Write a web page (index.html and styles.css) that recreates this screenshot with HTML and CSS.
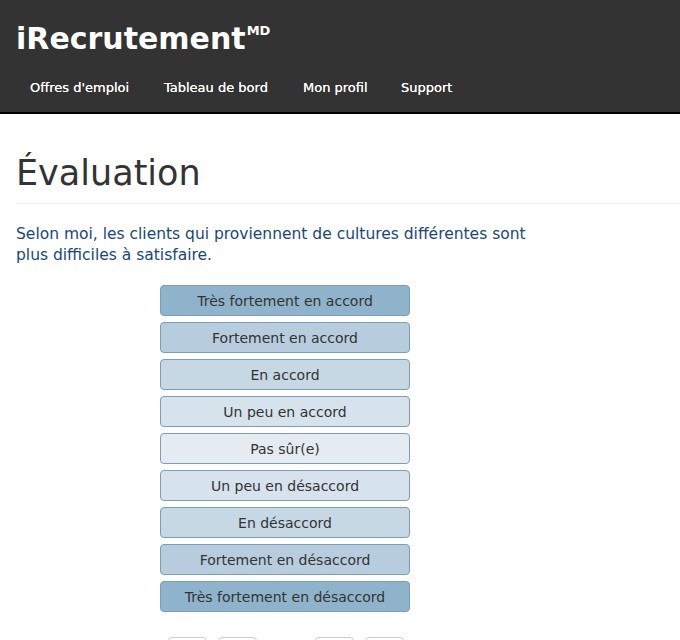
FILE: index.html
```html
<!DOCTYPE html>
<html lang="fr">
<head>
    <meta charset="UTF-8">
    <title>iRecrutement - Évaluation</title>
    <link rel="stylesheet" href="styles.css">
</head>
<body>
<header class="topbar">
    <div class="brand">iRecrutement<sup>MD</sup></div>
    <nav class="menu">
        <a href="#">Offres d'emploi</a>
        <a href="#">Tableau de bord</a>
        <a href="#">Mon profil</a>
        <a href="#">Support</a>
    </nav>
</header>

<main class="page">
    <h1>Évaluation</h1>

    <p class="question">Selon moi, les clients qui proviennent de cultures différentes sont plus difficiles à satisfaire.</p>

    <!-- Échelle de réponses -->
    <div class="scale">
        <button class="choice level-1">Très fortement en accord</button>
        <button class="choice level-2">Fortement en accord</button>
        <button class="choice level-3">En accord</button>
        <button class="choice level-4">Un peu en accord</button>
        <button class="choice level-5">Pas sûr(e)</button>
        <button class="choice level-4">Un peu en désaccord</button>
        <button class="choice level-3">En désaccord</button>
        <button class="choice level-2">Fortement en désaccord</button>
        <button class="choice level-1">Très fortement en désaccord</button>
    </div>

    <div class="pager">
        <span class="pager-btn"></span>
        <span class="pager-btn"></span>
        <span class="pager-gap"></span>
        <span class="pager-btn"></span>
        <span class="pager-btn"></span>
    </div>
</main>
</body>
</html>
```

FILE: styles.css
```css
body {
    font-family: "DejaVu Sans", Verdana, sans-serif;
    color: #333;
    margin: 0;
    background: #fff;
}

.topbar {
    background-color: #333;
    border-bottom: 2px solid #000;
    height: 112px;
    padding: 0 16px;
}

.brand {
    color: #fff;
    font-size: 30px;
    font-weight: bold;
    padding-top: 13px;
    line-height: 36px;
}

.brand sup {
    font-size: 13px;
    vertical-align: 14px;
    margin-left: 1px;
}

.menu {
    display: flex;
    margin-top: 23px;
    padding-left: 14px;
}

.menu a {
    color: #fff;
    text-decoration: none;
    font-size: 13px;
    text-shadow: 0 0 0.5px #fff;
}

.menu a:nth-child(1) { width: 134px; }
.menu a:nth-child(2) { width: 139px; }
.menu a:nth-child(3) { width: 98px; }

.page {
    padding: 0 0 0 16px;
}

h1 {
    font-size: 35px;
    font-weight: normal;
    margin: 0;
    padding: 37px 0 8px;
    border-bottom: 1px solid #eee;
    line-height: 44px;
}

.question {
    color: #17477c;
    font-size: 15.5px;
    line-height: 21px;
    width: 530px;
    margin: 20px 0 19px;
}

.scale {
    display: flex;
    flex-direction: column;
    gap: 6px;
    width: 250px;
    margin-left: 144px;
}

.choice {
    font-family: inherit;
    font-size: 14px;
    color: #333;
    height: 31px;
    border: 1px solid #7b9db6;
    border-radius: 4px;
    cursor: pointer;
    padding: 0;
}

.level-1 { background-color: #8fb3ca; }
.level-2 { background-color: #b7cddd; }
.level-3 { background-color: #c6d8e4; }
.level-4 { background-color: #d6e3ec; }
.level-5 { background-color: #e4ecf2; }

.pager {
    display: flex;
    gap: 11px;
    margin: 25px 0 0 152px;
}

.pager-btn {
    width: 37px;
    height: 30px;
    border: 1px solid #ccc;
    border-radius: 4px;
}

.pager-gap {
    width: 36px;
}
```
